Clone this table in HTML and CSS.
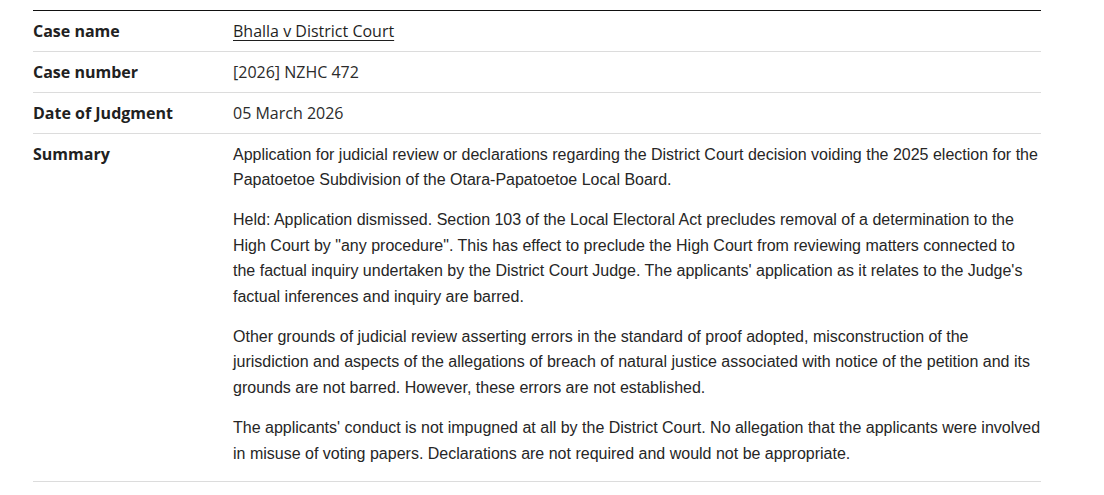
FILE: index.html
```html
<!DOCTYPE html>
<html lang="en">
<head>
<meta charset="utf-8">
<title>Case details</title>
<link rel="stylesheet" href="styles.css">
</head>
<body>
<main class="page">
  <table class="case-table">
    <tbody>
      <tr>
        <th class="label">Case name</th>
        <td class="value"><a href="#" class="case-link">Bhalla v District Court</a></td>
      </tr>
      <tr>
        <th class="label">Case number</th>
        <td class="value">[2026] NZHC 472</td>
      </tr>
      <tr>
        <th class="label">Date of Judgment</th>
        <td class="value">05 March 2026</td>
      </tr>
      <tr>
        <th class="label">Summary</th>
        <td class="value summary">
          <p>Application for judicial review or declarations regarding the District Court decision voiding the 2025 election for the Papatoetoe Subdivision of the Otara-Papatoetoe Local Board.</p>
          <p>Held: Application dismissed. Section 103 of the Local Electoral Act precludes removal of a determination to the High Court by "any procedure". This has effect to preclude the High Court from reviewing matters connected to the factual inquiry undertaken by the District Court Judge. The applicants' application as it relates to the Judge's factual inferences and inquiry are barred.</p>
          <p>Other grounds of judicial review asserting errors in the standard of proof adopted, misconstruction of the jurisdiction and aspects of the allegations of breach of natural justice associated with notice of the petition and its grounds are not barred. However, these errors are not established.</p>
          <p>The applicants' conduct is not impugned at all by the District Court. No allegation that the applicants were involved in misuse of voting papers. Declarations are not required and would not be appropriate.</p>
        </td>
      </tr>
    </tbody>
  </table>
</main>
</body>
</html>
```

FILE: styles.css
```css
html, body {
  margin: 0;
  padding: 0;
  background: #ffffff;
}

.page {
  padding: 10px 0 0 33px;
}

.case-table {
  width: 1008px;
  border-collapse: collapse;
  border-top: 1px solid #111111;
  font-family: "Open Sans", "Liberation Sans", sans-serif;
  font-size: 16px;
  color: #212121;
}

.case-table tr {
  border-bottom: 1px solid #dcdcdc;
}

.label {
  width: 200px;
  text-align: left;
  vertical-align: top;
  font-weight: 700;
  padding: 8px 0;
  line-height: 24px;
}

.value {
  vertical-align: top;
  padding: 8px 0;
  line-height: 24px;
  color: #2b2b2b;
}

.case-link {
  color: #1f1f1f;
  text-decoration: underline;
  text-underline-offset: 3px;
}

.summary {
  font-family: "Liberation Sans", Arial, sans-serif;
  line-height: 25.6px;
  padding: 7.5px 0 0;
  color: #262626;
}

.summary p {
  margin: 0 0 14.4px;
}
```
